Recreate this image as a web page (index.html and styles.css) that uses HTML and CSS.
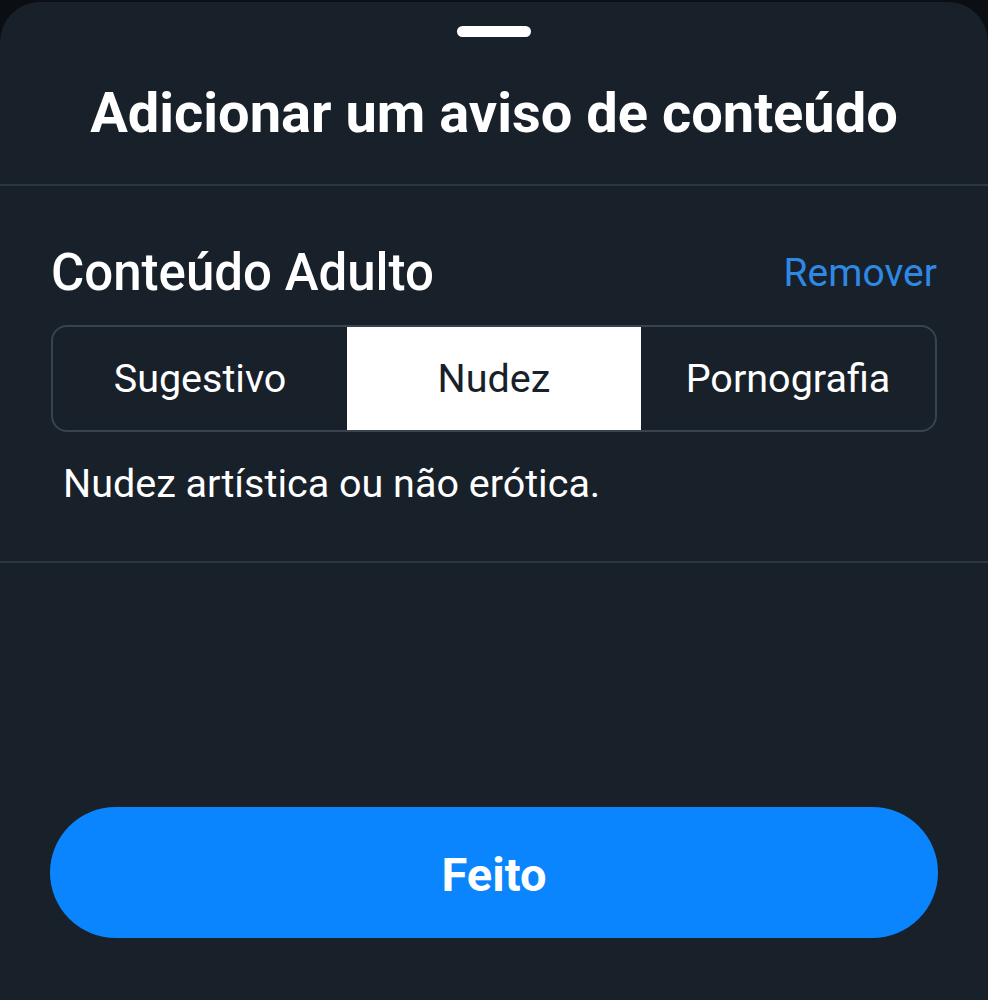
FILE: index.html
```html
<!DOCTYPE html>
<html lang="pt">
<head>
    <meta charset="UTF-8">
    <meta name="viewport" content="width=device-width, initial-scale=1.0">
    <title>Aviso de conteúdo</title>
    <link rel="stylesheet" href="styles.css">
</head>
<body>
    <div class="sheet">
        <div class="handle"></div>
        <h1 class="sheet-title">Adicionar um aviso de conteúdo</h1>
        <div class="section">
            <div class="section-head">
                <h2>Conteúdo Adulto</h2>
                <button class="link-btn">Remover</button>
            </div>
            <div class="segments">
                <button class="segment">Sugestivo</button>
                <button class="segment active">Nudez</button>
                <button class="segment">Pornografia</button>
            </div>
            <p class="hint">Nudez artística ou não erótica.</p>
        </div>
        <div class="footer">
            <button class="done-btn">Feito</button>
        </div>
    </div>
</body>
</html>
```

FILE: styles.css
```css
html, body {
    padding: 0px;
    margin: 0px;
    height: 100%;
}
body {
    background-color: #0b0e13;
    font-family: Roboto, "Liberation Sans", sans-serif;
    color: #ffffff;
}
.sheet {
    margin-top: 2px;
    height: 998px;
    background-color: #18202a;
    border-radius: 40px 40px 0px 0px;
    display: flex;
    flex-direction: column;
}
.handle {
    width: 74px;
    height: 11px;
    border-radius: 6px;
    background-color: #ffffff;
    margin: 24px auto 0px;
}
.sheet-title {
    margin: 0px;
    padding: 44px 0px 39px;
    text-align: center;
    font-size: 56px;
    font-weight: 700;
    line-height: 64px;
    border-bottom: 2px solid #2c3742;
}
.section {
    padding: 0px 51px;
    border-bottom: 2px solid #2c3742;
}
.section-head {
    display: flex;
    justify-content: space-between;
    align-items: center;
    margin-top: 59px;
    height: 56px;
}
.section-head h2 {
    margin: 0px;
    font-size: 51px;
    font-weight: 500;
    line-height: 56px;
}
.link-btn {
    background: none;
    border: none;
    padding: 0px;
    color: #2f88e4;
    font-family: inherit;
    font-size: 39px;
}
.segments {
    display: grid;
    grid-template-columns: repeat(3, 1fr);
    margin-top: 24px;
    height: 107px;
    border: 2px solid #38434f;
    border-radius: 16px;
    overflow: hidden;
    box-sizing: border-box;
}
.segment {
    background: none;
    border: none;
    color: #ffffff;
    font-family: inherit;
    font-size: 39.5px;
}
.segment.active {
    background-color: #ffffff;
    color: #18202a;
}
.hint {
    margin: 28px 12px 53px;
    font-size: 39.5px;
    line-height: 48px;
}
.footer {
    flex: 1;
    display: flex;
    align-items: flex-end;
    padding: 0px 50px 62px;
}
.done-btn {
    width: 100%;
    height: 131px;
    padding-top: 4px;
    border: none;
    border-radius: 66px;
    background-color: #0a85fe;
    color: #ffffff;
    font-family: inherit;
    font-size: 47px;
    font-weight: 700;
}
```
